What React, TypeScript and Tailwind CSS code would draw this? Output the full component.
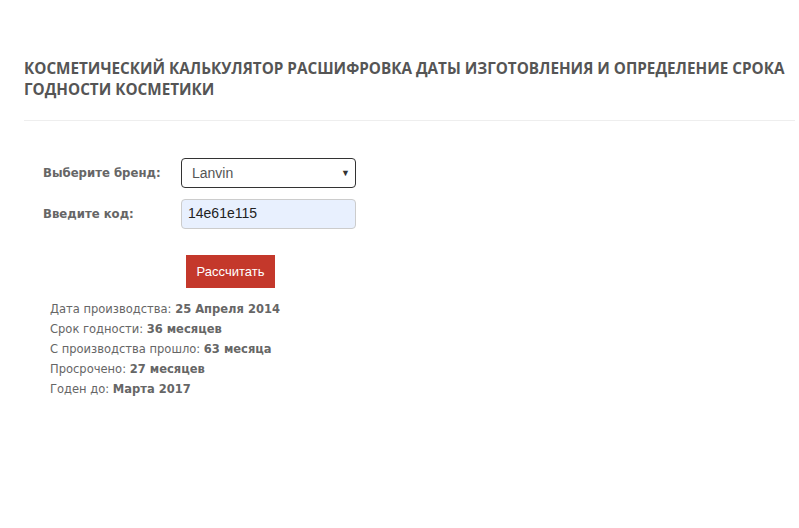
import { useState } from 'react';

const results = [
  { label: 'Дата производства:', value: '25 Апреля 2014' },
  { label: 'Срок годности:', value: '36 месяцев' },
  { label: 'С производства прошло:', value: '63 месяца' },
  { label: 'Просрочено:', value: '27 месяцев' },
  { label: 'Годен до:', value: 'Марта 2017' },
];

export default function App() {
  const [brand, setBrand] = useState('Lanvin');
  const [code, setCode] = useState('14e61e115');

  return (
    <div className="min-h-[528px] w-full bg-white pt-[58px] pl-6 pr-1">
      {/* Heading */}
      <h1 className="font-['Open_Sans',sans-serif] text-[15.25px] font-bold uppercase leading-[21px] text-[#555]">
        Косметический калькулятор расшифровка даты изготовления и определение срока годности косметики
      </h1>
      <div className="mt-[20px] h-px bg-[#eee]" />

      {/* Form */}
      <div className="mt-[37px] pl-[19px]">
        <div className="flex items-center">
          <label className="w-[138px] font-['DejaVu_Sans_Condensed','DejaVu_Sans',sans-serif] text-[13px] font-bold text-[#666]">
            Выберите бренд:
          </label>
          <div className="relative w-[175px]">
            <select
              value={brand}
              onChange={(e) => setBrand(e.target.value)}
              className="h-[30px] w-full appearance-none rounded-[4px] border border-[#333] bg-white pl-[10px] pr-6 font-['Liberation_Sans',sans-serif] text-[14px] text-[#555] outline-none"
            >
              <option>Lanvin</option>
              <option>Chanel</option>
              <option>Dior</option>
            </select>
            <span className="pointer-events-none absolute right-[6px] top-[8px] text-[9px] text-[#333]">▼</span>
          </div>
        </div>

        <div className="mt-[11px] flex items-center">
          <label className="w-[138px] font-['DejaVu_Sans_Condensed','DejaVu_Sans',sans-serif] text-[13px] font-bold text-[#666]">
            Введите код:
          </label>
          <input
            value={code}
            onChange={(e) => setCode(e.target.value)}
            className="h-[30px] w-[175px] rounded-[4px] border border-[#ccc] bg-[#e8f0fe] px-[6px] pb-[2px] font-['Liberation_Sans',sans-serif] text-[14px] text-[#222] outline-none"
          />
        </div>

        <button className="ml-[143px] mt-[26px] h-[33px] w-[89px] bg-[#c4382b] font-['Liberation_Sans',sans-serif] text-[13px] text-white">
          Рассчитать
        </button>
      </div>

      {/* Results */}
      <div className="mt-[11px] pl-[26px] font-['DejaVu_Sans_Condensed','DejaVu_Sans',sans-serif] text-[12.8px] leading-[20px] text-[#666]">
        {results.map((r) => (
          <p key={r.label}>
            {r.label} <b className="font-bold">{r.value}</b>
          </p>
        ))}
      </div>
    </div>
  );
}
